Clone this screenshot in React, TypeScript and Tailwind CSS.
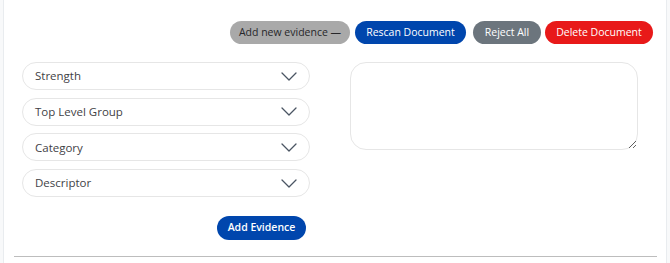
import React from "react";

const font = { fontFamily: '"Open Sans", sans-serif' };

function Chevron() {
  return (
    <svg width="16" height="9" viewBox="0 0 16 9" fill="none" className="shrink-0">
      <path d="M1 1l7 7 7-7" stroke="#4b5563" strokeWidth="1.3" strokeLinecap="round" strokeLinejoin="round" />
    </svg>
  );
}

function Select({ label }: { label: string }) {
  return (
    <div className="flex h-[28px] w-[288px] items-center justify-between rounded-full border border-[#e6e6e6] bg-white pl-[12px] pr-[12px]">
      <span className="text-[11.5px] font-medium text-[#3f3f46]">{label}</span>
      <Chevron />
    </div>
  );
}

export default function App() {
  return (
    <div className="h-[263px] w-[670px] overflow-hidden bg-[#f8f9fa]" style={font}>
      <div className="ml-[3px] h-full w-[664px] border-x border-[#e9ecef] bg-white">
        <div className="flex justify-end gap-[4px] pr-[13px] pt-[21px]">
          <button className="h-[23px] w-[120px] rounded-full bg-[#a9a9a9] text-[10.5px] font-medium text-[#27272a]">Add new evidence —</button>
          <button className="ml-[1px] h-[23px] w-[111px] rounded-full bg-[#0046ad] text-[10.5px] font-medium text-white">Rescan Document</button>
          <button className="ml-[3px] h-[23px] w-[68px] rounded-full bg-[#6c757d] text-[10.5px] font-medium text-white">Reject All</button>
          <button className="h-[23px] w-[108px] rounded-full bg-[#e81919] text-[10.5px] font-medium text-white">Delete Document</button>
        </div>
        <div className="flex gap-[40px] pl-[18px] pt-[18px]">
          <div className="flex w-[288px] flex-col">
            <div className="flex flex-col gap-[7.7px]">
              <Select label="Strength" />
              <Select label="Top Level Group" />
              <Select label="Category" />
              <Select label="Descriptor" />
            </div>
            <div className="flex justify-end pr-[4px] pt-[19px]">
              <button className="h-[24px] w-[89px] rounded-full bg-[#0046ad] text-[10.5px] font-semibold text-white">Add Evidence</button>
            </div>
          </div>
          <textarea className="h-[88px] w-[288px] rounded-[16px] border border-[#e6e6e6] bg-white outline-none" />
        </div>
        <div className="ml-[10px] mt-[16px] h-px w-[643px] bg-[#bdbdbd]" />
      </div>
    </div>
  );
}
